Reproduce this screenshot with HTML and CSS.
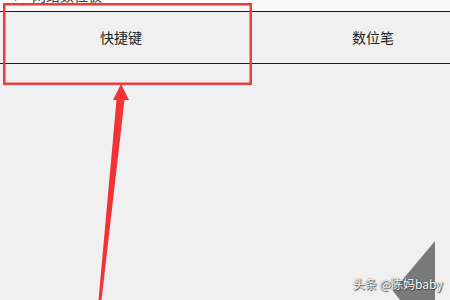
FILE: index.html
```html
<!DOCTYPE html>
<html lang="zh">
<head>
<meta charset="utf-8">
<link rel="stylesheet" href="styles.css">
</head>
<body>
<div class="page">
  <div class="topbar"><span class="toptext"><span class="caret">▼</span>网络数位板</span></div>
  <div class="tabs">
    <div class="tab tab-left">快捷键</div>
    <div class="tab tab-right">数位笔</div>
  </div>
  <div class="rest"></div>
  <svg class="overlay" width="450" height="300" viewBox="0 0 450 300">
    <polygon points="435,241 435,345 393,291" fill="#7a7a7a"/>
    <rect x="4.25" y="4.25" width="246.5" height="79.5" fill="none" stroke="#f03a3c" stroke-width="2.5"/>
    <polygon points="121,84 129,100 124.5,100 101.5,300 98.5,300 116.5,100 113,100" fill="#f23234"/>
  </svg>
  <div class="watermark">头条 @陈妈baby</div>
</div>
</body>
</html>
```
FILE: styles.css
```css
html, body {
  margin: 0;
  padding: 0;
}
body {
  background: #f0f0f0;
  font-family: "Noto Sans CJK SC", "Liberation Sans", sans-serif;
  overflow: hidden;
}
.page {
  position: relative;
  width: 450px;
  height: 300px;
  overflow: hidden;
  background: #f0f0f0;
}
.topbar {
  background: #fafafa;
  overflow: hidden;
  border-bottom: 1px solid #1a1a1a;
  box-sizing: border-box;
  height: 12px;
}
.toptext {
  display: block;
  margin-top: -14px;
  padding-left: 11px;
  font-size: 14px;
  line-height: 18px;
  color: #444;
  white-space: nowrap;
}
.caret {
  font-size: 9px;
  margin-right: 12px;
  color: #555;
}
.tabs {
  display: grid;
  grid-template-columns: 242px 262px;
  border-bottom: 1px solid #1a1a1a;
  box-sizing: border-box;
  height: 52px;
  background: #f0f0f0;
}
.tab {
  display: flex;
  align-items: center;
  justify-content: center;
  font-size: 14px;
  color: #222;
  padding-bottom: 1px;
}
.overlay {
  position: absolute;
  left: 0;
  top: 0;
}
.watermark {
  position: absolute;
  left: 353px;
  top: 276px;
  font-size: 12px;
  line-height: 16px;
  color: #fff;
  white-space: nowrap;
  text-shadow: 0 0 1px #333, 1px 1px 1px #444;
}
```
